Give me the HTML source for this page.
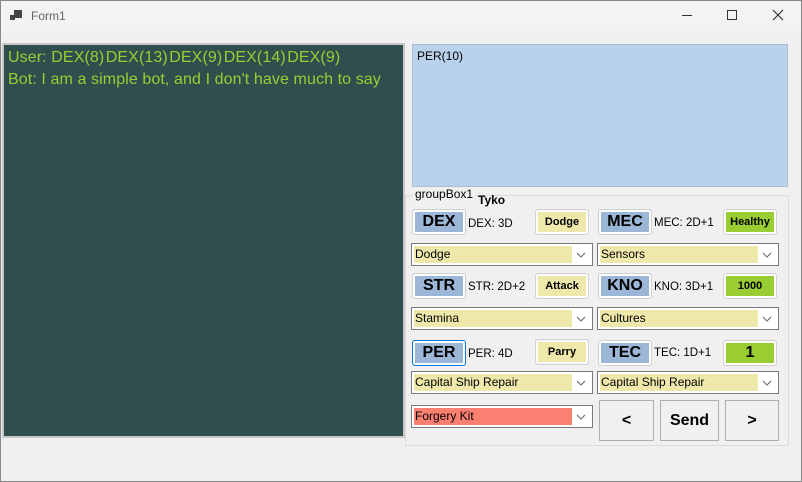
<!DOCTYPE html><html><head><style>
*{margin:0;padding:0;box-sizing:border-box}
body{width:802px;height:482px;background:#f0f0f0;font-family:"Liberation Sans",sans-serif;position:relative;overflow:hidden;box-shadow:inset 0 0 0 1px #888}
.a{position:absolute}
.tb{left:1px;top:1px;width:800px;height:30px;background:#f3f3f3}
.btn{position:absolute;height:26px;border:1px solid #d0d0d0;border-radius:3px;background:#fdfdfd;padding:2px}
.btn div{width:100%;height:100%;display:flex;align-items:center;justify-content:center;font-weight:bold}
.b{background:#9bb6d6;font-size:16px}
.y{background:#eee8aa;font-size:11px}
.g{background:#9acd32;font-size:11px}
.lbl{position:absolute;font-size:11.5px}
.cb{position:absolute;height:23px;width:182px;border:1px solid #7a7a7a;background:#fff;padding:2px}
.cb div{height:100%;width:158px;background:#eee8aa;font-size:12px;padding-left:1px;line-height:17px}
.cb svg{position:absolute;right:6px;top:8px}
.nb{position:absolute;top:400px;height:41px;border:1px solid #adadad;background:#f0f0f0;font-weight:bold;font-size:16px;display:flex;align-items:center;justify-content:center}
</style></head><body>
<div class="a tb"></div>
<svg class="a" style="left:10px;top:10px" width="12" height="12"><rect x="0" y="5" width="5" height="5" fill="#444"/><rect x="4" y="0" width="8" height="8" fill="#444"/></svg>
<div class="a" style="left:31px;top:9px;font-size:12px;color:#666">Form1</div>
<div class="a" style="left:682px;top:15px;width:10px;height:1px;background:#333"></div>
<div class="a" style="left:727px;top:10px;width:10px;height:10px;border:1px solid #333"></div>
<svg class="a" style="left:772px;top:9px" width="12" height="12"><path d="M1 1L11 11M11 1L1 11" stroke="#333" stroke-width="1.2"/></svg>
<div class="a" style="left:2px;top:43px;width:403px;height:395px;background:#2f4f4f;border:2px solid #c8c8c8;color:#9acd32;font-size:16px;line-height:22px;padding:2px 0 0 4px;white-space:nowrap;overflow:hidden;letter-spacing:0.1px">User: DEX(8)&#8202;DEX(13)&#8202;DEX(9)&#8202;DEX(14)&#8202;DEX(9)<br>Bot: I am a simple bot, and I don't have much to say</div>
<div class="a" style="left:412px;top:44px;width:376px;height:143px;background:#b9d1ea;border:1px solid #a8bcd4;font-size:12px;padding:4px 4px">PER(10)</div>
<div class="a" style="left:405px;top:195px;width:384px;height:251px;border:1px solid #dcdcdc"></div>
<div class="a" style="left:413px;top:187px;font-size:12px;background:#f0f0f0;padding:0 2px">groupBox1</div>
<div class="a" style="left:478px;top:193px;font-size:12px;font-weight:bold">Tyko</div>

<div class="btn" style="left:412px;top:209px;width:54px"><div class="b">DEX</div></div>
<div class="lbl" style="left:468px;top:218px">DEX: 3D</div>
<div class="btn" style="left:535px;top:209px;width:54px"><div class="y">Dodge</div></div>
<div class="btn" style="left:598px;top:209px;width:54px"><div class="b">MEC</div></div>
<div class="lbl" style="left:654px;top:217px">MEC: 2D+1</div>
<div class="btn" style="left:723px;top:209px;width:54px"><div class="g">Healthy</div></div>
<div class="cb" style="left:411px;top:243px"><div>Dodge</div><svg width="10" height="6"><path d="M1 1L5 5L9 1" fill="none" stroke="#666"/></svg></div>
<div class="cb" style="left:597px;top:243px"><div>Sensors</div><svg width="10" height="6"><path d="M1 1L5 5L9 1" fill="none" stroke="#666"/></svg></div>

<div class="btn" style="left:412px;top:273px;width:54px"><div class="b">STR</div></div>
<div class="lbl" style="left:468px;top:281px">STR: 2D+2</div>
<div class="btn" style="left:535px;top:273px;width:54px"><div class="y">Attack</div></div>
<div class="btn" style="left:598px;top:273px;width:54px"><div class="b">KNO</div></div>
<div class="lbl" style="left:654px;top:281px">KNO: 3D+1</div>
<div class="btn" style="left:723px;top:273px;width:54px"><div class="g">1000</div></div>
<div class="cb" style="left:411px;top:307px"><div>Stamina</div><svg width="10" height="6"><path d="M1 1L5 5L9 1" fill="none" stroke="#666"/></svg></div>
<div class="cb" style="left:597px;top:307px"><div>Cultures</div><svg width="10" height="6"><path d="M1 1L5 5L9 1" fill="none" stroke="#666"/></svg></div>

<div class="btn" style="left:412px;top:340px;width:54px;border-color:#0078d7"><div class="b">PER</div></div>
<div class="lbl" style="left:468px;top:348px">PER: 4D</div>
<div class="btn" style="left:535px;top:339px;width:54px"><div class="y">Parry</div></div>
<div class="btn" style="left:598px;top:340px;width:54px"><div class="b">TEC</div></div>
<div class="lbl" style="left:654px;top:347px">TEC: 1D+1</div>
<div class="btn" style="left:723px;top:340px;width:54px"><div class="g" style="font-size:16px">1</div></div>
<div class="cb" style="left:411px;top:371px"><div>Capital Ship Repair</div><svg width="10" height="6"><path d="M1 1L5 5L9 1" fill="none" stroke="#666"/></svg></div>
<div class="cb" style="left:597px;top:371px"><div>Capital Ship Repair</div><svg width="10" height="6"><path d="M1 1L5 5L9 1" fill="none" stroke="#666"/></svg></div>
<div class="cb" style="left:411px;top:405px"><div style="background:#fa8072">Forgery Kit</div><svg width="10" height="6"><path d="M1 1L5 5L9 1" fill="none" stroke="#666"/></svg></div>

<div class="nb" style="left:599px;width:55px">&lt;</div>
<div class="nb" style="left:660px;width:59px">Send</div>
<div class="nb" style="left:725px;width:54px">&gt;</div>
</body></html>
